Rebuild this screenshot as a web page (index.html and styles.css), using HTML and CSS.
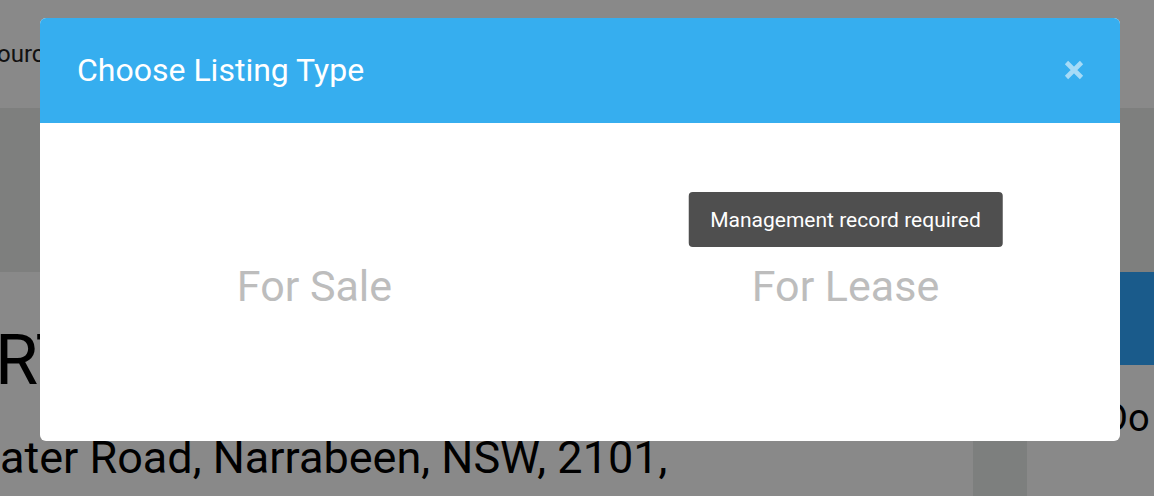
FILE: index.html
```html
<!DOCTYPE html>
<html lang="en">
<head>
<meta charset="utf-8">
<title>Choose Listing Type</title>
<link rel="stylesheet" href="styles.css">
</head>
<body>
<div class="page">
  <header class="topbar"><span class="crumb">ourc</span></header>
  <div class="band"></div>
  <div class="content">
    <div class="main">
      <h1 class="title">RT</h1>
      <p class="address">ater Road, Narrabeen, NSW, 2101,</p>
    </div>
    <div class="side">
      <div class="side-col"></div>
      <div class="side-panel">
        <div class="side-btn"></div>
        <p class="side-text">Do</p>
      </div>
    </div>
  </div>
</div>

<div class="modal">
  <div class="modal-header">
    <h2 class="modal-title">Choose Listing Type</h2>
    <button class="close" aria-label="Close">
      <svg width="20" height="20" viewBox="0 0 20 20"><path d="M2.5 2.5 L17.5 17.5 M17.5 2.5 L2.5 17.5" stroke="#a6dbf7" stroke-width="4.6" stroke-linecap="butt"/></svg>
    </button>
  </div>
  <div class="modal-body">
    <div class="option"><span class="option-label">For Sale</span></div>
    <div class="option">
      <span class="option-label">For Lease
        <span class="tooltip">Management record required</span>
      </span>
    </div>
  </div>
</div>
</body>
</html>
```
FILE: styles.css
```css
* { box-sizing: border-box; }
html, body { margin: 0; padding: 0; }
body {
  width: 1154px;
  height: 496px;
  overflow: hidden;
  background: #898989;
  font-family: Roboto, "Liberation Sans", sans-serif;
  color: #000;
  position: relative;
}
.page { display: flex; flex-direction: column; }
.topbar {
  height: 108px;
  background: #898989;
  display: flex;
  align-items: flex-start;
  padding-top: 40px;
}
.crumb {
  font-size: 24px;
  line-height: 1.2;
  color: #111;
  margin-left: -3px;
}
.band { height: 164px; background: #7e7f7e; }
.content { display: flex; height: 224px; }
.main { width: 973px; flex-shrink: 0; }
.title {
  margin: 46px 0 0 -5px;
  font-size: 70px;
  font-weight: 400;
  line-height: 1.2;
}
.address {
  margin: 29px 0 0 0;
  font-size: 45px;
  line-height: 1.2;
  white-space: nowrap;
}
.side { display: flex; flex: 1; min-width: 0; }
.side-col { width: 54px; flex-shrink: 0; background: #7d7f7e; }
.side-panel { flex: 1; min-width: 0; padding-left: 13px; }
.side-btn { height: 93px; background: #1a5b8b; }
.side-text {
  margin: 31px 0 0 63px;
  font-size: 38px;
  line-height: 1.2;
  white-space: nowrap;
}

.modal {
  position: absolute;
  left: 40px;
  top: 18px;
  width: 1080px;
  height: 423px;
  background: #fff;
  border-radius: 6px;
  overflow: hidden;
  display: flex;
  flex-direction: column;
}
.modal-header {
  height: 105px;
  background: #36aeef;
  display: flex;
  align-items: flex-start;
  justify-content: space-between;
  padding: 33px 36px 0 37px;
}
.modal-title {
  margin: 0;
  font-size: 32px;
  font-weight: 400;
  line-height: 1.2;
  color: #fff;
}
.close {
  border: 0;
  background: none;
  padding: 0;
  margin-top: 9px;
  width: 20px;
  height: 20px;
  display: flex;
}
.modal-body {
  flex: 1;
  display: flex;
  padding: 138px 9px 0;
}
.option { flex: 1; display: flex; justify-content: center; align-items: flex-start; }
.option-label {
  position: relative;
  font-size: 43px;
  line-height: 1.2;
  color: #bdbdbd;
}
.tooltip {
  position: absolute;
  bottom: 100%;
  left: 50%;
  transform: translateX(-50%);
  margin-bottom: 14px;
  white-space: nowrap;
  background: #4f4f4f;
  color: #fff;
  font-size: 21px;
  line-height: 24px;
  padding: 15.5px 22px;
  border-radius: 4px;
}
```
